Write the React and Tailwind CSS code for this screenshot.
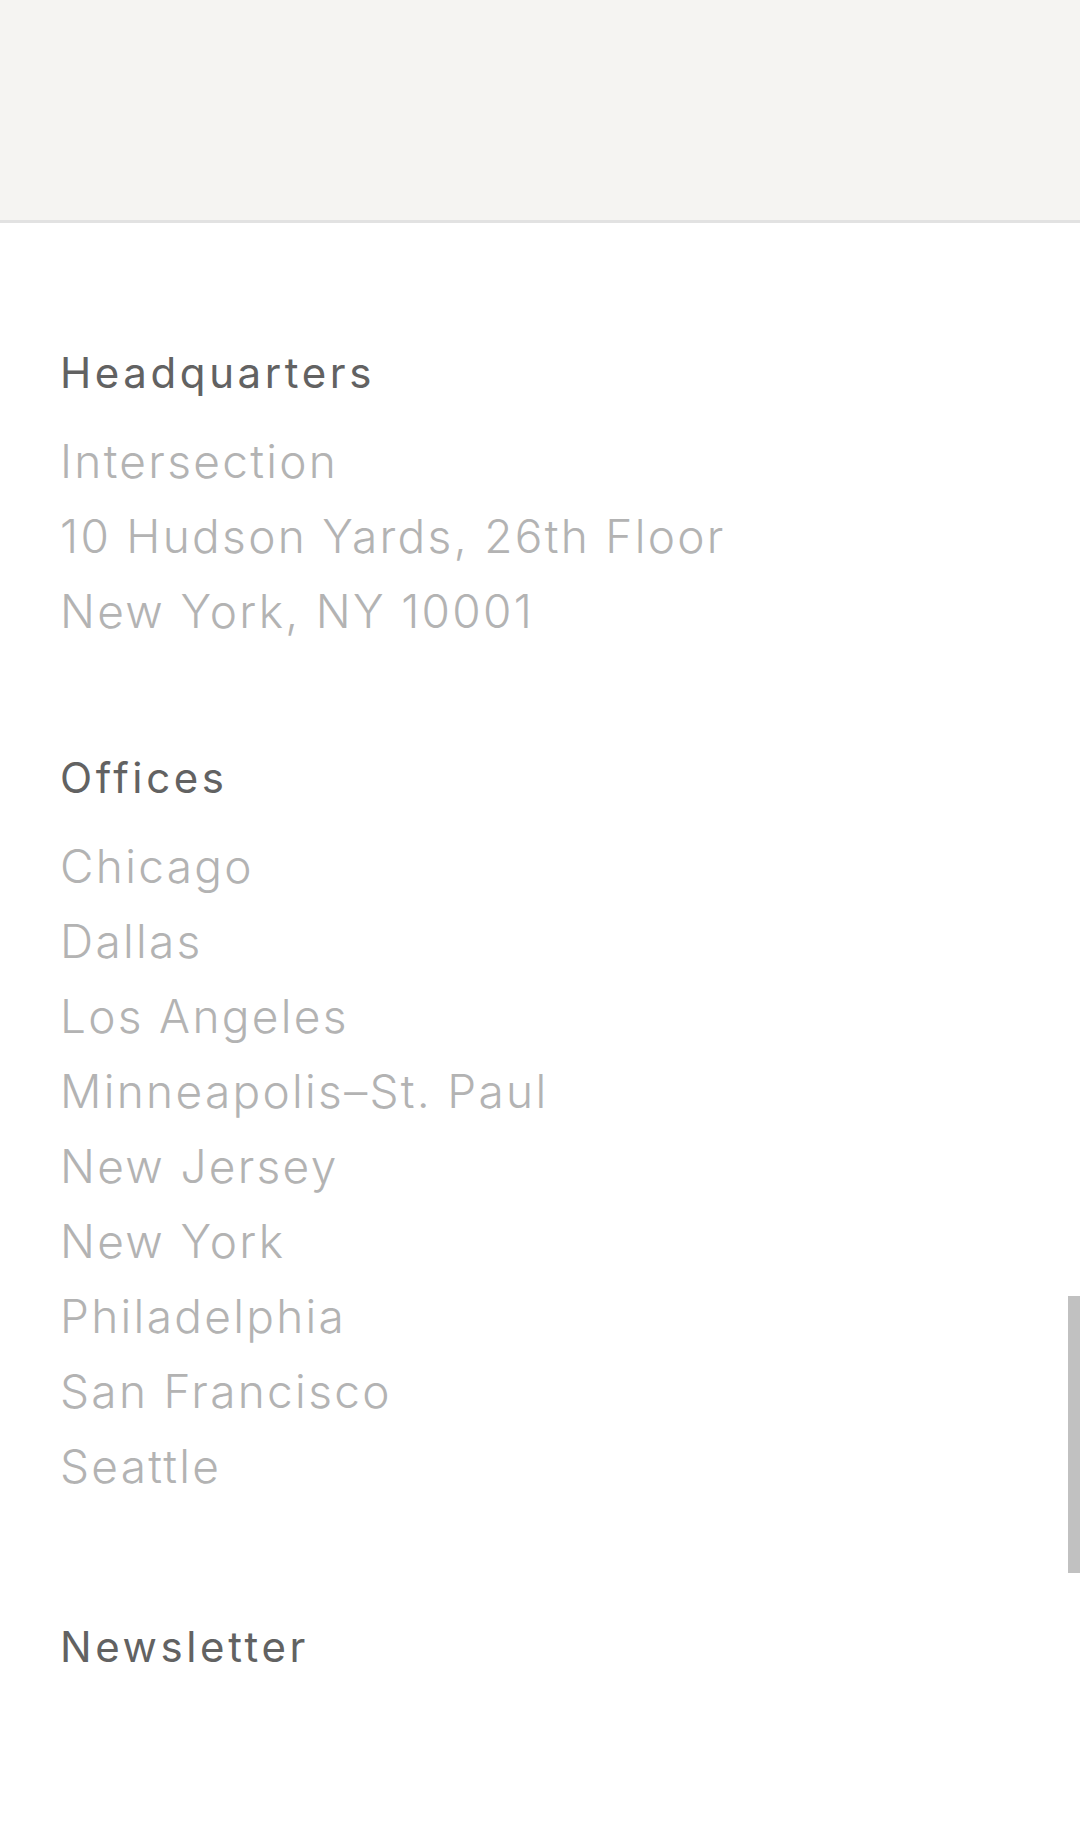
import React from "react";

const hq = ["Intersection", "10 Hudson Yards, 26th Floor", "New York, NY 10001"];

const offices = [
  "Chicago",
  "Dallas",
  "Los Angeles",
  "Minneapolis–St. Paul",
  "New Jersey",
  "New York",
  "Philadelphia",
  "San Francisco",
  "Seattle",
];

function Section({ title, items, className = "" }) {
  return (
    <div className={className}>
      <h3 className="text-[42px] leading-[75px] tracking-[3.6px] text-[#626262] font-normal">{title}</h3>
      {items && (
        <ul className="mt-[14px]">
          {items.map((item) => (
            <li
              key={item}
              className="text-[46px] leading-[75px] tracking-[2.3px] text-[#b3b3b3] font-light"
            >
              {item}
            </li>
          ))}
        </ul>
      )}
    </div>
  );
}

export default function App() {
  return (
    <div
      className="relative min-h-[1848px] bg-white overflow-hidden"
      style={{ fontFamily: "Inter, 'Noto Sans', sans-serif" }}
    >
      <div className="h-[223px] bg-[#f5f4f2] border-b-[3px] border-[#e2e2e2]" />

      <footer className="px-[60px] pt-[112px]">
        <Section title="Headquarters" items={hq} />
        <Section title="Offices" items={offices} className="mt-[91px]" />
        <Section title="Newsletter" className="mt-[105px]" />
      </footer>

      {/* scrollbar thumb */}
      <div className="absolute right-0 top-[1296px] w-[12px] h-[277px] bg-[#c1c1c1]" />
    </div>
  );
}
